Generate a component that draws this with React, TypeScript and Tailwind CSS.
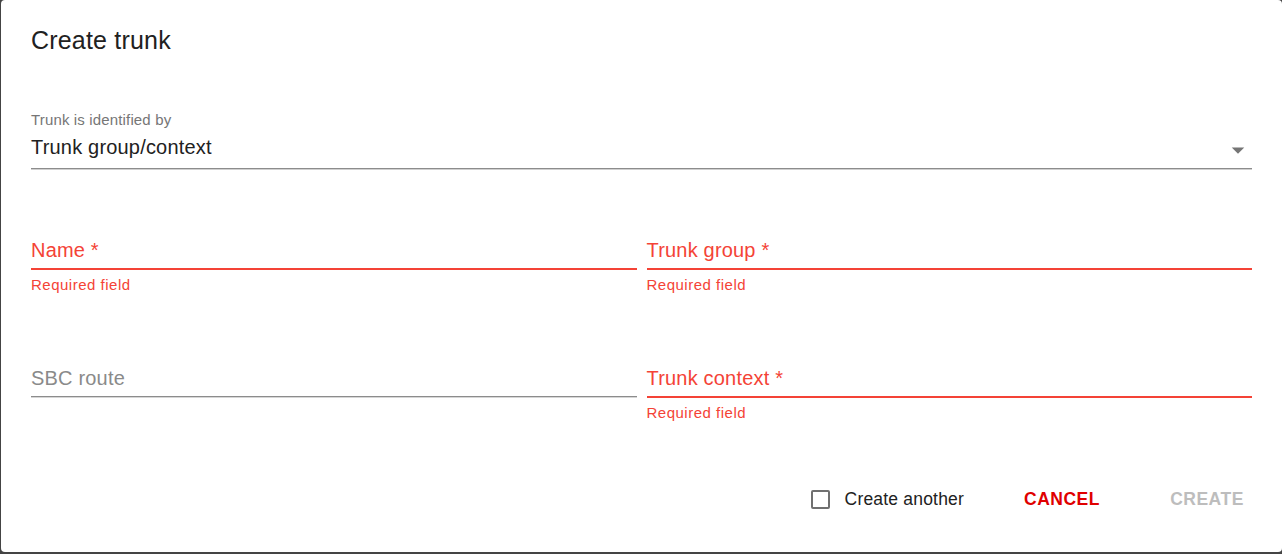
import React from "react";

const font = { fontFamily: '"Liberation Sans", Arial, sans-serif' };

function Field({
  label,
  error,
}: {
  label: string;
  error?: boolean;
}) {
  return (
    <div className="flex flex-col">
      <div
        className={`h-[24px] text-[20px] leading-[24px] tracking-[0.19px] pb-0 ${
          error ? "text-[#f44336]" : "text-[#8a8a8a]"
        }`}
      >
        {label}
        {error ? <span> *</span> : null}
      </div>
      <div className="h-[6px]" />
      {error ? (
        <div className="h-[2px] bg-[#f44336]" />
      ) : (
        <div className="h-[2px] flex flex-col">
          <div className="h-[1px] bg-[#8c8c8c]" />
          <div className="h-[1px] bg-[#d6d6d6]" />
        </div>
      )}
      {error ? (
        <div className="mt-[7px] h-[15px] text-[15px] leading-[15px] tracking-[0.5px] text-[#f44336]">
          Required field
        </div>
      ) : null}
    </div>
  );
}

export default function App() {
  return (
    <div
      className="w-[1282px] h-[554px] bg-[#444444] pl-[1px] overflow-hidden"
      style={font}
    >
      <div className="w-[1281px] h-[552px] bg-white rounded-[4px] flex flex-col">
        <div className="pt-[20px] px-[30px] h-[60px] text-[25px] leading-[40px] tracking-[0.19px] text-[#212121]">
          Create trunk
        </div>

        <div className="px-[30px] flex flex-col">
          {/* Select */}
          <div className="mt-[52px] flex flex-col">
            <div className="h-[15px] text-[15px] leading-[15px] tracking-[0.15px] text-[#767676]">
              Trunk is identified by
            </div>
            <div className="relative mt-[8px] h-[24px] text-[20px] leading-[24px] tracking-[0.19px] text-[#212121]">
              Trunk group/context
              <svg
                viewBox="0 0 24 24"
                className="absolute right-[-1px] top-0 w-[30px] h-[30px]"
              >
                <path d="M7 10l5 5 5-5z" fill="#757575" />
              </svg>
            </div>
            <div className="h-[9px]" />
            <div className="h-[1px] bg-[#8c8c8c]" />
            <div className="h-[1px] bg-[#d0d0d0]" />
          </div>

          {/* Row 1 */}
          <div className="mt-[68px] grid grid-cols-2 gap-x-[10px]">
            <Field label="Name" error />
            <Field label="Trunk group" error />
          </div>

          {/* Row 2 */}
          <div className="mt-[74px] grid grid-cols-2 gap-x-[10px] items-start">
            <Field label="SBC route" />
            <Field label="Trunk context" error />
          </div>
        </div>

        {/* Footer */}
        <div className="mt-[59px] h-[40px] flex items-center pr-[25px]">
          <div className="ml-auto flex items-center">
            <div className="w-[19px] h-[19px] border-2 border-[#707070] rounded-[2px]" />
            <div className="ml-[15px] text-[17.5px] leading-[24px] tracking-[0.19px] text-[#212121]">
              Create another
            </div>
          </div>
          <div className="ml-[48px] w-[100px] text-center text-[17.5px] leading-[24px] font-bold tracking-[0.5px] text-[#e00000]">
            CANCEL
          </div>
          <div className="ml-[45px] w-[100px] text-center text-[17.5px] leading-[24px] font-bold tracking-[0.5px] text-[#bdbdbd]">
            CREATE
          </div>
        </div>
      </div>
    </div>
  );
}
